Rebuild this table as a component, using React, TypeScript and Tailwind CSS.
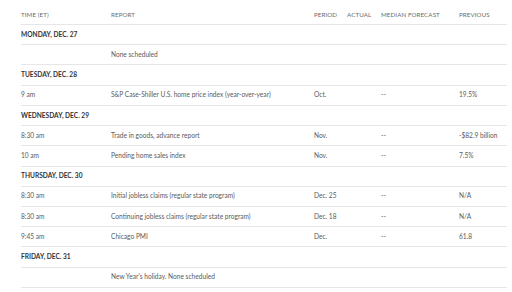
const cols = "grid grid-cols-[90px_203px_33px_34px_78px_49px]";

type Row =
  | { kind: "day"; label: string }
  | { kind: "item"; time: string; report: string; period?: string; forecast?: string; previous?: string };

const rows: Row[] = [
  { kind: "day", label: "MONDAY, DEC. 27" },
  { kind: "item", time: "", report: "None scheduled" },
  { kind: "day", label: "TUESDAY, DEC. 28" },
  { kind: "item", time: "9 am", report: "S&P Case-Shiller U.S. home price index (year-over-year)", period: "Oct.", forecast: "--", previous: "19.5%" },
  { kind: "day", label: "WEDNESDAY, DEC. 29" },
  { kind: "item", time: "8:30 am", report: "Trade in goods, advance report", period: "Nov.", forecast: "--", previous: "-$82.9 billion" },
  { kind: "item", time: "10 am", report: "Pending home sales index", period: "Nov.", forecast: "--", previous: "7.5%" },
  { kind: "day", label: "THURSDAY, DEC. 30" },
  { kind: "item", time: "8:30 am", report: "Initial jobless claims (regular state program)", period: "Dec. 25", forecast: "--", previous: "N/A" },
  { kind: "item", time: "8:30 am", report: "Continuing jobless claims (regular state program)", period: "Dec. 18", forecast: "--", previous: "N/A" },
  { kind: "item", time: "9:45 am", report: "Chicago PMI", period: "Dec.", forecast: "--", previous: "61.8" },
  { kind: "day", label: "FRIDAY, DEC. 31" },
  { kind: "item", time: "", report: "New Year's holiday. None scheduled" },
];

export default function App() {
  return (
    <div className="w-[512px] h-[292px] bg-white pl-[21px] pr-[5px] pt-[4.8px] overflow-hidden font-['Lato',sans-serif]">
      {/* header */}
      <div className={`${cols} h-[20.23px] items-center border-b border-[#e6e6e6] text-[6.2px] text-[#6b6b6b] tracking-[0.1px]`}>
        <div>TIME (ET)</div>
        <div>REPORT</div>
        <div>PERIOD</div>
        <div>ACTUAL</div>
        <div>MEDIAN FORECAST</div>
        <div>PREVIOUS</div>
      </div>

      {rows.map((r, i) =>
        r.kind === "day" ? (
          <div key={i} className="h-[20.23px] flex items-center border-b border-[#e6e6e6] text-[6.6px] font-bold text-[#333]">
            {r.label}
          </div>
        ) : (
          <div key={i} className={`${cols} h-[20.23px] items-center border-b border-[#e6e6e6] text-[6.6px] text-[#5a5a5a]`}>
            <div>{r.time}</div>
            <div className="whitespace-nowrap">{r.report}</div>
            <div>{r.period}</div>
            <div></div>
            <div>{r.forecast}</div>
            <div className="whitespace-nowrap">{r.previous}</div>
          </div>
        )
      )}
    </div>
  );
}
